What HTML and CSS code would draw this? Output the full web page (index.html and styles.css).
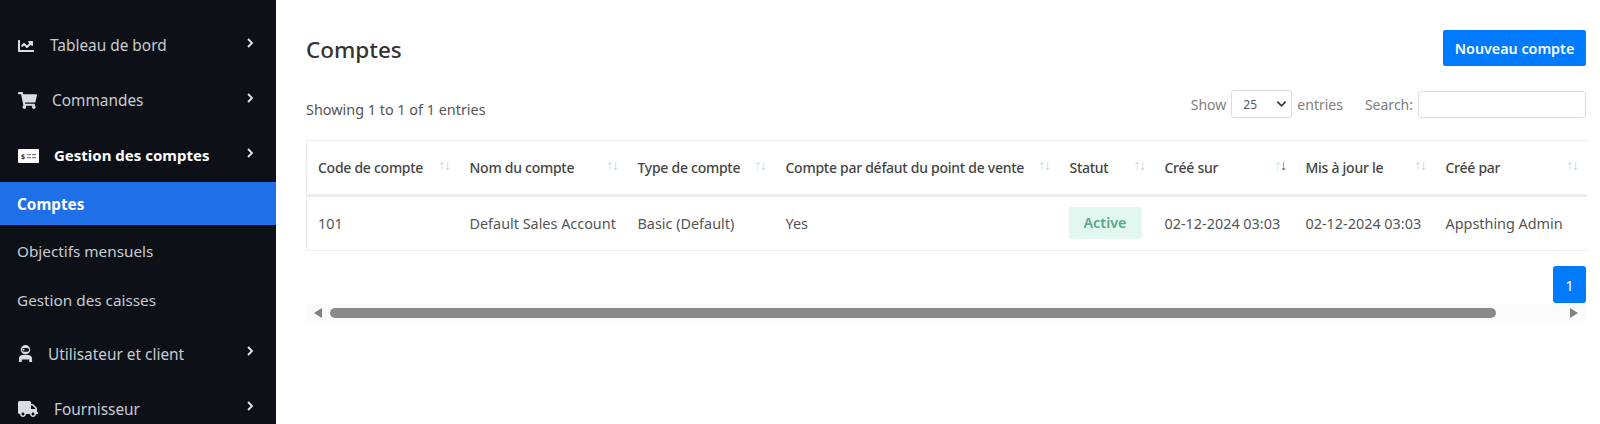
FILE: index.html
```html
<!DOCTYPE html>
<html lang="fr">
<head>
    <meta charset="UTF-8">
    <title>Comptes</title>
    <link rel="stylesheet" href="styles.css">
</head>
<body>
    <div class="layout">
        <nav class="sidebar">
            <a class="nav-item">
                <svg class="nav-icon icon-chart" viewBox="0 0 512 512"><path d="M496 384H64V80c0-8.84-7.16-16-16-16H16C7.16 64 0 71.16 0 80v336c0 17.67 14.33 32 32 32h464c8.84 0 16-7.16 16-16v-32c0-8.84-7.16-16-16-16zM464 96H345.94c-21.38 0-32.09 25.85-16.97 40.97l32.4 32.4L288 242.75l-73.37-73.37c-12.5-12.5-32.76-12.5-45.25 0l-68.69 68.69c-6.25 6.25-6.25 16.38 0 22.63l22.62 22.62c6.25 6.25 16.38 6.25 22.63 0L192 237.25l73.37 73.37c12.5 12.5 32.76 12.5 45.25 0l96-96 32.4 32.4c15.12 15.12 40.97 4.41 40.97-16.97V112c.01-8.84-7.15-16-15.99-16z"/></svg>
                <span class="nav-label">Tableau de bord</span>
                <svg class="chevron" viewBox="0 0 8 12"><path d="M2 2l4 4-4 4"/></svg>
            </a>
            <a class="nav-item">
                <svg class="nav-icon icon-cart" viewBox="0 0 576 512"><path d="M528.12 301.319l47.273-208C578.806 78.301 567.391 64 551.99 64H159.208l-9.166-44.81C147.758 8.021 137.93 0 126.529 0H24C10.745 0 0 10.745 0 24v16c0 13.255 10.745 24 24 24h69.883l70.248 343.435C147.325 417.1 136 435.222 136 456c0 30.928 25.072 56 56 56s56-25.072 56-56c0-15.674-6.447-29.835-16.824-40h209.647C430.447 426.165 424 440.326 424 456c0 30.928 25.072 56 56 56s56-25.072 56-56c0-22.172-12.888-41.332-31.579-50.405l5.517-24.276c3.413-15.018-8.002-29.319-23.403-29.319H218.117l-6.545-32h293.145c11.206 0 20.92-7.754 23.403-18.681z"/></svg>
                <span class="nav-label">Commandes</span>
                <svg class="chevron" viewBox="0 0 8 12"><path d="M2 2l4 4-4 4"/></svg>
            </a>
            <a class="nav-item open">
                <svg class="nav-icon icon-money" viewBox="0 0 21 14">
                    <rect width="21" height="14" rx="1" fill="#fff"/>
                    <text x="3" y="10" class="icon-dollar">$</text>
                    <rect x="9" y="5.2" width="4" height="1" fill="#5a6068"/>
                    <rect x="14" y="5.2" width="4" height="1" fill="#5a6068"/>
                    <rect x="9" y="8.2" width="4" height="1" fill="#5a6068"/>
                    <rect x="14" y="8.2" width="4" height="1" fill="#5a6068"/>
                </svg>
                <span class="nav-label">Gestion des comptes</span>
                <svg class="chevron" viewBox="0 0 8 12"><path d="M2 2l4 4-4 4"/></svg>
            </a>
            <a class="sub-item active">Comptes</a>
            <a class="sub-item first-sub">Objectifs mensuels</a>
            <a class="sub-item">Gestion des caisses</a>
            <a class="nav-item after-subs">
                <svg class="nav-icon icon-user" viewBox="0 0 16 18">
                    <circle cx="8" cy="5" r="5"/>
                    <rect x="4.2" y="3" width="7.6" height="4" rx="2" fill="#0d1117"/>
                    <circle cx="6" cy="5" r="1" />
                    <path d="M1 18v-3.5C1 12 3 10.6 5 10.6h6c2 0 4 1.4 4 3.9V18h-3v-2.6H4V18z"/>
                </svg>
                <span class="nav-label">Utilisateur et client</span>
                <svg class="chevron" viewBox="0 0 8 12"><path d="M2 2l4 4-4 4"/></svg>
            </a>
            <a class="nav-item lower">
                <svg class="nav-icon icon-truck" viewBox="0 0 640 512"><path d="M624 352h-16V243.9c0-12.7-5.1-24.9-14.1-33.9L494 110.1c-9-9-21.2-14.1-33.9-14.1H416V48c0-26.5-21.5-48-48-48H48C21.5 0 0 21.5 0 48v320c0 26.5 21.5 48 48 48h16c0 53 43 96 96 96s96-43 96-96h128c0 53 43 96 96 96s96-43 96-96h48c8.8 0 16-7.2 16-16v-32c0-8.8-7.2-16-16-16zM160 464c-26.5 0-48-21.5-48-48s21.5-48 48-48 48 21.5 48 48-21.5 48-48 48zm320 0c-26.5 0-48-21.5-48-48s21.5-48 48-48 48 21.5 48 48-21.5 48-48 48zm80-208H416V144h44.1l99.9 99.9V256z"/></svg>
                <span class="nav-label">Fournisseur</span>
                <svg class="chevron" viewBox="0 0 8 12"><path d="M2 2l4 4-4 4"/></svg>
            </a>
        </nav>

        <main class="content">
            <div class="page-head">
                <h1>Comptes</h1>
                <button class="btn-primary">Nouveau compte</button>
            </div>

            <div class="table-tools">
                <div class="info">Showing 1 to 1 of 1 entries</div>
                <div class="filters">
                    <label class="length">Show
                        <span class="fake-select">25
                            <svg viewBox="0 0 12 8"><path d="M1.5 1.5L6 6l4.5-4.5"/></svg>
                        </span>
                        entries</label>
                    <label class="search">Search: <input type="text"></label>
                </div>
            </div>

            <table class="data-table">
                <colgroup>
                    <col class="c1"><col class="c2"><col class="c3"><col class="c4">
                    <col class="c5"><col class="c6"><col class="c7"><col class="c8">
                </colgroup>
                <thead>
                    <tr>
                        <th>Code de compte<span class="sort">↑↓</span></th>
                        <th>Nom du compte<span class="sort">↑↓</span></th>
                        <th>Type de compte<span class="sort">↑↓</span></th>
                        <th>Compte par défaut du point de vente<span class="sort">↑↓</span></th>
                        <th>Statut<span class="sort">↑↓</span></th>
                        <th>Créé sur<span class="sort">↑<b>↓</b></span></th>
                        <th>Mis à jour le<span class="sort">↑↓</span></th>
                        <th>Créé par<span class="sort">↑↓</span></th>
                    </tr>
                </thead>
                <tbody>
                    <tr>
                        <td>101</td>
                        <td>Default Sales Account</td>
                        <td>Basic (Default)</td>
                        <td>Yes</td>
                        <td class="status-cell"><span class="badge">Active</span></td>
                        <td>02-12-2024 03:03</td>
                        <td>02-12-2024 03:03</td>
                        <td>Appsthing Admin</td>
                    </tr>
                </tbody>
            </table>

            <div class="pager"><a class="page-num">1</a></div>

            <div class="scrollbar">
                <span class="arrow-left"></span>
                <div class="scroll-track"><div class="scroll-thumb"></div></div>
                <span class="arrow-right"></span>
            </div>
        </main>
    </div>
</body>
</html>
```

FILE: styles.css
```css
* { box-sizing: border-box; }

html, body {
    margin: 0;
    height: 424px;
    overflow: hidden;
}

body {
    font-family: "Noto Sans", "Open Sans", sans-serif;
    font-size: 14.4px;
    color: #555;
    background: #fff;
}

.layout {
    display: flex;
    height: 424px;
}

/* sidebar */
.sidebar {
    width: 276px;
    flex-shrink: 0;
    height: 424px;
    overflow: hidden;
    background: #0d1117;
    padding-top: 18px;
}

.nav-item {
    display: flex;
    align-items: center;
    height: 55px;
    padding-left: 18px;
    padding-right: 22px;
    color: #c9ccd1;
    font-size: 15.4px;
}

.nav-icon {
    fill: #d8dee3;
    flex-shrink: 0;
    margin-right: 16px;
}

.icon-chart { width: 16px; height: 16px; }
.icon-cart { width: 19px; height: 17px; margin-right: 15px; }
.icon-money { width: 21px; height: 14px; margin-right: 15px; }
.icon-user { width: 15px; height: 17px; margin-right: 15px; }
.icon-truck { width: 20px; height: 16px; }

.icon-dollar {
    font-family: "Noto Sans", sans-serif;
    font-size: 7px;
    fill: #333;
}

.nav-label {
    flex: 1;
}

.chevron {
    width: 8px;
    height: 12px;
    margin-top: -5px;
    fill: none;
    stroke: #e4e6e9;
    stroke-width: 1.8;
}

.open { color: #fff; font-weight: 700; font-size: 15px; }
.open .nav-label { padding-bottom: 2px; }
.open .nav-icon { fill: #fff; }

.sub-item {
    display: flex;
    align-items: center;
    height: 48px;
    padding-left: 17px;
    color: #c9ccd1;
    font-size: 15.3px;
}

.sub-item.active {
    height: 43px;
    margin-top: -1px;
    background: #1f6fe8;
    color: #fff;
    font-weight: 700;
}

.first-sub { margin-top: 2px; }
.first-sub + .sub-item { padding-top: 1px; }
.after-subs { margin-top: 3px; }
.after-subs .nav-label, .lower .nav-label { padding-top: 2px; }

/* main area */
.content {
    flex: 1;
    min-width: 0;
    padding: 30px 14px 0 30px;
}

.page-head {
    display: flex;
    justify-content: space-between;
    align-items: center;
    height: 36px;
}

.page-head h1 {
    margin: 2px 0 0;
    font-size: 22.5px;
    font-weight: 500;
    color: #333;
}

.btn-primary {
    width: 143px;
    height: 36px;
    padding: 0;
    border: none;
    border-radius: 2px;
    background: #007bff;
    color: #fff;
    font-family: inherit;
    font-size: 14.3px;
    font-weight: 600;
}

.table-tools {
    display: flex;
    justify-content: space-between;
    align-items: center;
    height: 28px;
    margin-top: 24px;
    margin-bottom: 22px;
}

.info {
    margin-top: 10px;
    color: #555;
}

.filters {
    display: flex;
    align-items: center;
    font-size: 14px;
    color: #808080;
}

.length { display: flex; align-items: center; gap: 5px; }

.fake-select {
    display: flex;
    align-items: center;
    justify-content: space-between;
    width: 61px;
    height: 28px;
    padding: 0 4px 0 11px;
    border: 1px solid #ddd;
    border-radius: 3px;
    font-size: 12px;
    color: #555;
}

.fake-select svg {
    width: 11px;
    height: 8px;
    fill: none;
    stroke: #333;
    stroke-width: 1.8;
}

.search { display: flex; align-items: center; gap: 5px; margin-left: 22px; }

.search input {
    width: 168px;
    height: 27px;
    border: 1px solid #ddd;
    border-radius: 3px;
}

/* table */
.data-table {
    width: 1280px;
    table-layout: fixed;
    border-collapse: collapse;
    border: 1px solid #eceef0;
    border-right: none;
}

.c1 { width: 152px; }
.c2 { width: 168px; }
.c3 { width: 148px; }
.c4 { width: 284px; }
.c5 { width: 95px; }
.c6 { width: 141px; }
.c7 { width: 140px; }
.c8 { width: 152px; }

.data-table th {
    position: relative;
    height: 55px;
    padding: 0 12px 0 11px;
    border-bottom: 3px solid #eceef0;
    text-align: left;
    font-weight: 500;
    font-size: 14px;
    letter-spacing: -0.27px;
    color: #444;
    white-space: nowrap;
}

.sort {
    position: absolute;
    right: 9px;
    top: 14px;
    font-size: 14px;
    font-weight: 300;
    letter-spacing: -1.5px;
    color: #ccd0d4;
}

.sort b { font-weight: 400; color: #555; }

.data-table td {
    height: 55px;
    padding: 0 12px 0 11px;
    color: #555;
    white-space: nowrap;
}

.badge {
    display: inline-block;
    width: 73px;
    height: 32px;
    line-height: 32px;
    margin-left: -1px;
    margin-bottom: 2px;
    border-radius: 2px;
    background: #e1f7f0;
    color: #58a78b;
    font-weight: 600;
    text-align: center;
}

.pager {
    display: flex;
    justify-content: flex-end;
    margin-top: 15px;
}

.page-num {
    display: flex;
    align-items: center;
    justify-content: center;
    width: 33px;
    height: 37px;
    border-radius: 3px;
    background: #007bff;
    color: #fff;
    font-size: 15px;
}

.scrollbar {
    display: flex;
    align-items: center;
    height: 17px;
    margin-top: 1px;
    background: #fafafa;
}

.arrow-left, .arrow-right {
    width: 0;
    height: 0;
    border-top: 5.5px solid transparent;
    border-bottom: 5.5px solid transparent;
}

.arrow-left {
    margin-left: 8px;
    border-right: 8px solid #808080;
}

.arrow-right {
    margin-right: 8px;
    border-left: 8px solid #808080;
}

.scroll-track {
    flex: 1;
    padding: 0 74px 0 8px;
}

.scroll-thumb {
    height: 10px;
    border-radius: 5px;
    background: #8a8a8a;
}
```
